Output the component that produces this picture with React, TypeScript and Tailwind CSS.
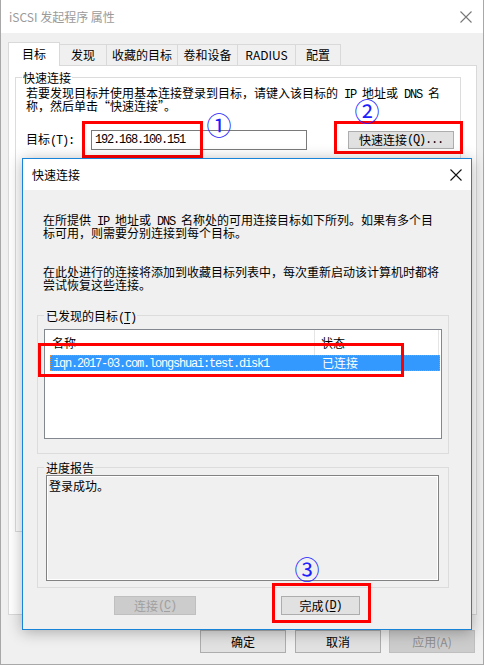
import React from "react";

// SimSun-like latin: monospaced, 6px per char
const M = ({ children, u }: { children: React.ReactNode; u?: boolean }) => (
  <span className={`font-[family-name:'Liberation_Mono',monospace] text-[12px] leading-none tracking-[-1.2px] ${u ? "underline underline-offset-2" : ""}`}>
    {children}
  </span>
);

// one fixed-height text line
const L = ({ children }: { children: React.ReactNode }) => (
  <div className="h-[13px] leading-[13px] whitespace-nowrap">{children}</div>
);

const Close = ({ color }: { color: string }) => (
  <svg width="12" height="12" viewBox="0 0 12 12" aria-hidden="true">
    <path d="M0.5 0.5 L11.5 11.5 M11.5 0.5 L0.5 11.5" stroke={color} strokeWidth="1.1" fill="none" />
  </svg>
);

const Circled = ({ n, className }: { n: string; className: string }) => (
  <span className={`absolute flex items-center justify-center w-[24px] h-[24px] text-[25px] leading-none text-[#2020ff] ${className}`}>
    {n}
  </span>
);

const tabs = [
  { label: "目标", w: "w-[52px]", active: true },
  { label: "发现", w: "w-[48px]" },
  { label: "收藏的目标", w: "w-[72px]" },
  { label: "卷和设备", w: "w-[61px]" },
  { label: "RADIUS", w: "w-[59px]" },
  { label: "配置", w: "w-[46px]" },
];

export default function App() {
  return (
    <div className="relative w-[485px] h-[666px] overflow-hidden bg-white text-[12px] text-black font-[family-name:'Noto_Sans_CJK_SC',sans-serif]">
      {/* Properties window */}
      <div className="flex flex-col w-[484px] h-[665px] border-x border-b border-[#a8a8a8] bg-[#f0f0f0]">
        <div className="h-[33px] shrink-0 bg-white flex items-center justify-between pl-[8px] pr-[11px]">
          <span className="text-[#9a9a9a] leading-none">iSCSI 发起程序 属性</span>
          <Close color="#777" />
        </div>

        <div className="flex flex-col pl-[7px] pr-[6px] pt-[9px]">
          {/* Tabs */}
          <div className="flex items-end h-[23px]">
            {tabs.map((t, i) => (
              <div
                key={t.label}
                className={`${t.w} ${i > 0 ? "-ml-px" : ""} flex items-center justify-center border-x border-t border-[#d9d9d9] leading-none ${
                  t.active ? "h-[24px] -mb-px relative z-10 bg-white pb-[2px]" : "h-[21px] bg-[#f0f0f0]"
                }`}
              >
                {t.label}
              </div>
            ))}
          </div>

          {/* Tab panel */}
          <div className="h-[550px] border border-[#d9d9d9] bg-white pl-[6px]">
            <fieldset className="mt-[5px] w-[446px] h-[461px] border border-[#dcdcdc] pl-[6px]">
              <legend className="px-[1px] h-[13px] leading-[13px]">快速连接</legend>
              <div className="pl-[4px]">
                <div className="mt-[2px]">
                  <L>
                    若要发现目标并使用基本连接登录到目标，请键入该目标的<M> IP </M>地址或<M> DNS </M>名
                  </L>
                  <L>称，然后单击“快速连接”。</L>
                </div>
                <div className="mt-[18px] flex items-center h-[20px]">
                  <span className="w-[65px] leading-none">
                    目标<M>(T):</M>
                  </span>
                  <div className="w-[216px] h-[20px] border border-[#7a7a7a] bg-white pl-[3px] flex items-center">
                    <M>192.168.100.151</M>
                  </div>
                  <button className="ml-[41px] w-[106px] h-[18px] bg-[#e1e1e1] border border-[#adadad] flex items-center justify-center leading-none">
                    快速连接<M>(Q)...</M>
                  </button>
                </div>
              </div>
            </fieldset>
          </div>

          <div className="mt-[15px] flex justify-end mr-[2px] leading-none">
            <button className="w-[86px] h-[23px] bg-[#e1e1e1] border border-[#adadad] flex items-center justify-center">确定</button>
            <button className="ml-[9px] w-[86px] h-[23px] bg-[#e1e1e1] border border-[#adadad] flex items-center justify-center">取消</button>
            <button className="ml-[8px] w-[86px] h-[23px] bg-[#cccccc] border border-[#bfbfbf] text-[#8e8e8e] flex items-center justify-center">应用(A)</button>
          </div>
        </div>
      </div>

      {/* Annotations under the dialog */}
      <div className="absolute left-[82px] top-[121px] w-[121px] h-[37px] border-[3px] border-[#ff0000]" />
      <div className="absolute left-[334px] top-[121px] w-[129px] h-[33px] border-[3px] border-[#ff0000]" />
      <Circled n="①" className="left-[207px] top-[112px]" />
      <Circled n="②" className="left-[355px] top-[98px]" />

      {/* Quick connect dialog */}
      <div className="absolute left-[22px] top-[158px] w-[450px] h-[472px] flex flex-col border border-[#1883d7] bg-[#f0f0f0] shadow-[0_2px_14px_rgba(0,0,0,0.3)]">
        <div className="h-[31px] shrink-0 bg-white flex items-center justify-between pl-[9px] pr-[9px]">
          <span className="leading-none">快速连接</span>
          <Close color="#111" />
        </div>

        <div className="flex-1 flex flex-col px-[14px] pt-[23px]">
          <div className="pl-[6px]">
            <L>
              在所提供<M> IP </M>地址或<M> DNS </M>名称处的可用连接目标如下所列。如果有多个目
            </L>
            <L>标可用，则需要分别连接到每个目标。</L>
          </div>
          <div className="mt-[26px] pl-[6px]">
            <L>在此处进行的连接将添加到收藏目标列表中，每次重新启动该计算机时都将</L>
            <L>尝试恢复这些连接。</L>
          </div>

          <fieldset className="mt-[18px] w-[412px] h-[145px] border border-[#dcdcdc] pl-[6px]">
            <legend className="pl-[2px] pr-[1px] h-[13px] leading-[13px] whitespace-nowrap">
              已发现的目标<M>(</M>
              <M u>T</M>
              <M>)</M>
            </legend>
            <div className="mt-[7px] w-[398px] h-[110px] border border-[#828790] bg-white">
              <div className="flex h-[25px]">
                <div className="w-[270px] border-r border-[#e5e5e5] pl-[7px] pt-[6px] leading-[13px]">名称</div>
                <div className="w-[124px] border-r border-[#e5e5e5] pl-[6px] pt-[6px] leading-[13px]">状态</div>
              </div>
              <div className="ml-[5px] mr-[1px] h-[16px] flex items-center bg-[#3399ff] border border-dotted border-[#e0903f] text-white">
                <span className="w-[264px] pl-[2px] leading-none">
                  <M>iqn.2017-03.com.longshuai:test.disk1</M>
                </span>
                <span className="pl-[7px] leading-none">已连接</span>
              </div>
            </div>
          </fieldset>

          <fieldset className="mt-[7px] w-[412px] h-[127px] border border-[#dcdcdc] pl-[6px]">
            <legend className="pl-[2px] pr-[1px] h-[13px] leading-[13px]">进度报告</legend>
            <div className="mt-[1px] ml-[2px] w-[393px] h-[106px] border border-[#828282] shadow-[inset_0_0_0_1px_#ffffff] bg-[#f0f0f0] pl-[2px] pt-[3px] leading-[13px]">
              登录成功。
            </div>
          </fieldset>

          <div className="mt-[8px] flex leading-none">
            <button className="ml-[77px] w-[82px] h-[19px] bg-[#cccccc] border border-[#bfbfbf] text-[#a0a0a0] flex items-center justify-center">
              连接<M>(</M>
              <M u>C</M>
              <M>)</M>
            </button>
            <button className="ml-[85px] w-[79px] h-[19px] bg-[#e1e1e1] border border-[#adadad] flex items-center justify-center">
              完成<M>(</M>
              <M u>D</M>
              <M>)</M>
            </button>
          </div>
        </div>
      </div>

      {/* Annotations over the dialog */}
      <div className="absolute left-[38px] top-[343px] w-[366px] h-[34px] border-[3px] border-[#ff0000]" />
      <div className="absolute left-[272px] top-[583px] w-[99px] h-[40px] border-[3px] border-[#ff0000]" />
      <Circled n="③" className="left-[295px] top-[556px]" />
    </div>
  );
}
